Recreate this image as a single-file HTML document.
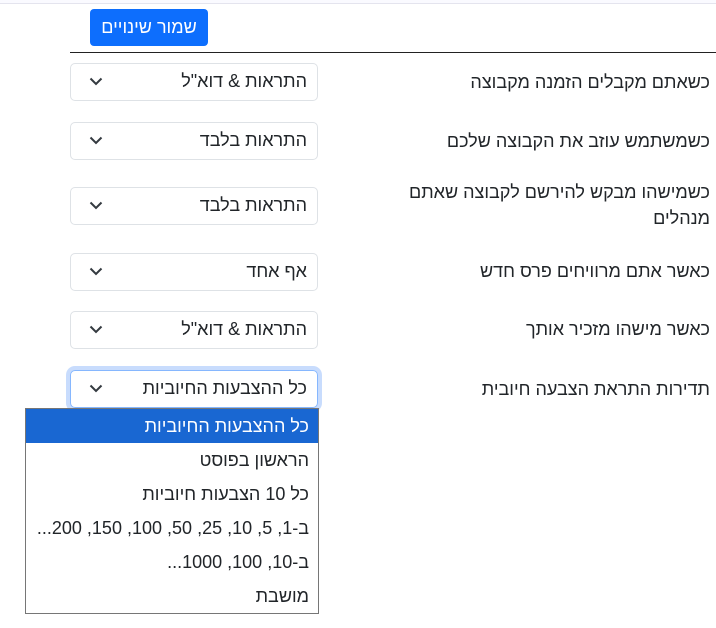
<!DOCTYPE html>
<html><head><meta charset="utf-8"><style>
body{margin:0;width:716px;height:628px;background:#fff;font-family:"Liberation Sans","DejaVu Sans",sans-serif;color:#212529;position:relative;overflow:hidden;font-size:18px}
.top{position:absolute;left:0;top:0;width:716px;height:3px;border-bottom:1px solid #e4e4ee;background:#fafaff}
.btn{position:absolute;left:90px;top:9px;width:118px;height:37px;background:#0d6efd;border-radius:4px;color:#fff;direction:rtl;text-align:center;line-height:37px;font-size:18px}
.hr{position:absolute;left:70px;top:52px;width:646px;height:1px;background:#222}
.sel{position:absolute;left:70px;width:246px;height:36px;border:1px solid #dee2e6;border-radius:5px;direction:rtl;box-sizing:content-box}
.sel span{position:absolute;right:10px;top:7px;white-space:nowrap}
.sel svg{position:absolute;left:18px;top:13px}
.lab{position:absolute;right:6px;direction:rtl;text-align:right;white-space:nowrap;line-height:26px}
.focus{border-color:#86b7fe;box-shadow:0 0 0 4px #c8dcfd}
.dd{position:absolute;left:25px;top:408px;width:292px;height:204px;border:1px solid #767676;background:#fff;direction:rtl}
.dd div{height:34px;line-height:34px;padding-right:9px;white-space:nowrap;font-size:18px}
.dd .hl{background:#1967d2;color:#fff}
</style></head><body>
<div class="top"></div>
<div class="btn">שמור שינויים</div>
<div class="hr"></div>

<div class="sel" style="top:63px"><span>התראות &amp; דוא"ל</span><svg width="14" height="9" viewBox="0 0 14 9"><path d="M1.5 1.5 7 7l5.5-5.5" fill="none" stroke="#343a40" stroke-width="2"/></svg></div>
<div class="lab" style="top:69px">כשאתם מקבלים הזמנה מקבוצה</div>

<div class="sel" style="top:122px"><span>התראות בלבד</span><svg width="14" height="9" viewBox="0 0 14 9"><path d="M1.5 1.5 7 7l5.5-5.5" fill="none" stroke="#343a40" stroke-width="2"/></svg></div>
<div class="lab" style="top:128px">כשמשתמש עוזב את הקבוצה שלכם</div>

<div class="sel" style="top:187px"><span>התראות בלבד</span><svg width="14" height="9" viewBox="0 0 14 9"><path d="M1.5 1.5 7 7l5.5-5.5" fill="none" stroke="#343a40" stroke-width="2"/></svg></div>
<div class="lab" style="top:179px">כשמישהו מבקש להירשם לקבוצה שאתם<br>מנהלים</div>

<div class="sel" style="top:253px"><span>אף אחד</span><svg width="14" height="9" viewBox="0 0 14 9"><path d="M1.5 1.5 7 7l5.5-5.5" fill="none" stroke="#343a40" stroke-width="2"/></svg></div>
<div class="lab" style="top:258px">כאשר אתם מרוויחים פרס חדש</div>

<div class="sel" style="top:311px"><span>התראות &amp; דוא"ל</span><svg width="14" height="9" viewBox="0 0 14 9"><path d="M1.5 1.5 7 7l5.5-5.5" fill="none" stroke="#343a40" stroke-width="2"/></svg></div>
<div class="lab" style="top:316px">כאשר מישהו מזכיר אותך</div>

<div class="sel focus" style="top:370px"><span>כל ההצבעות החיוביות</span><svg width="14" height="9" viewBox="0 0 14 9"><path d="M1.5 1.5 7 7l5.5-5.5" fill="none" stroke="#343a40" stroke-width="2"/></svg></div>
<div class="lab" style="top:376px">תדירות התראת הצבעה חיובית</div>

<div class="dd">
<div class="hl">כל ההצבעות החיוביות</div>
<div>הראשון בפוסט</div>
<div>כל 10 הצבעות חיוביות</div>
<div>ב-1, 5, 10, 25, 50, 100, 150, 200...</div>
<div>ב-10, 100, 1000...</div>
<div>מושבת</div>
</div>
</body></html>
